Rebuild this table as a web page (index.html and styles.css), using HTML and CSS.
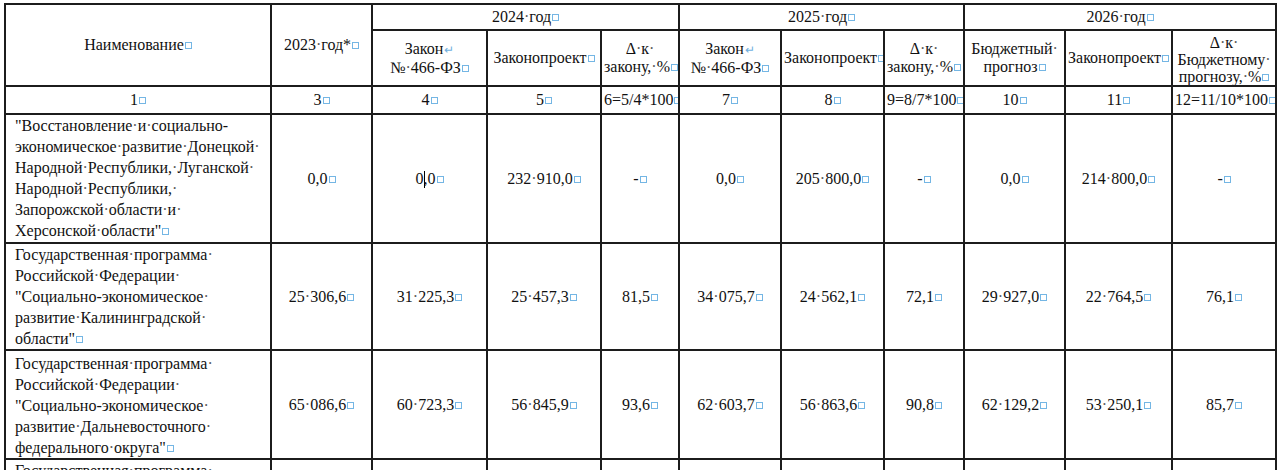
FILE: index.html
```html
<!DOCTYPE html>
<html lang="ru">
<head>
<meta charset="utf-8">
<title>Таблица — государственные программы</title>
<link rel="stylesheet" href="styles.css">
</head>
<body>

<!-- ====================== TABLE ====================== -->
<table class="doc-table">
  <colgroup>
    <col style="width:266px"><col style="width:101px">
    <col style="width:115px"><col style="width:114px"><col style="width:78px">
    <col style="width:102px"><col style="width:103px"><col style="width:80px">
    <col style="width:101px"><col style="width:107px"><col style="width:104px">
  </colgroup>
  <thead>
    <tr class="row-year">
      <th rowspan="2">Наименование<i class="cm"></i></th>
      <th rowspan="2">2023<span class="s">·</span>год*<i class="cm"></i></th>
      <th colspan="3">2024<span class="s">·</span>год<i class="cm"></i></th>
      <th colspan="3">2025<span class="s">·</span>год<i class="cm"></i></th>
      <th colspan="3">2026<span class="s">·</span>год<i class="cm"></i></th>
    </tr>
    <tr class="row-sub">
      <th>Закон<span class="br">↵</span><br>№<span class="s">·</span>466-ФЗ<i class="cm"></i></th>
      <th class="tight">Законопроект<i class="cm"></i></th>
      <th class="tight">Δ<span class="s">·</span>к<span class="s">·</span><br>закону,<span class="s">·</span>%<i class="cm"></i></th>
      <th>Закон<span class="br">↵</span><br>№<span class="s">·</span>466-ФЗ<i class="cm"></i></th>
      <th class="tight">Законопроект<i class="cm"></i></th>
      <th class="tight">Δ<span class="s">·</span>к<span class="s">·</span><br>закону,<span class="s">·</span>%<i class="cm"></i></th>
      <th>Бюджетный<span class="s">·</span><br>прогноз<i class="cm"></i></th>
      <th class="tight">Законопроект<i class="cm"></i></th>
      <th class="tight three">Δ<span class="s">·</span>к<span class="s">·</span><br>Бюджетному<span class="s">·</span><br>прогнозу,<span class="s">·</span>%<i class="cm"></i></th>
    </tr>
    <tr class="row-num">
      <th>1<i class="cm"></i></th>
      <th>3<i class="cm"></i></th>
      <th>4<i class="cm"></i></th>
      <th>5<i class="cm"></i></th>
      <th class="tight">6=5/4*100<i class="cm"></i></th>
      <th>7<i class="cm"></i></th>
      <th>8<i class="cm"></i></th>
      <th class="tight">9=8/7*100<i class="cm"></i></th>
      <th>10<i class="cm"></i></th>
      <th>11<i class="cm"></i></th>
      <th class="tight">12=11/10*100<i class="cm"></i></th>
    </tr>
  </thead>
  <tbody>
    <tr class="row-a">
      <td class="name">"Восстановление<span class="s">·</span>и<span class="s">·</span>социально-<br>экономическое<span class="s">·</span>развитие<span class="s">·</span>Донецкой<span class="s">·</span><br>Народной<span class="s">·</span>Республики,<span class="s">·</span>Луганской<span class="s">·</span><br>Народной<span class="s">·</span>Республики,<span class="s">·</span><br>Запорожской<span class="s">·</span>области<span class="s">·</span>и<span class="s">·</span><br>Херсонской<span class="s">·</span>области"<i class="cm"></i></td>
      <td>0,0<i class="cm"></i></td>
      <td>0<span class="caret"></span>,0<i class="cm"></i></td>
      <td>232<span class="s">·</span>910,0<i class="cm"></i></td>
      <td>-<i class="cm"></i></td>
      <td>0,0<i class="cm"></i></td>
      <td>205<span class="s">·</span>800,0<i class="cm"></i></td>
      <td>-<i class="cm"></i></td>
      <td>0,0<i class="cm"></i></td>
      <td>214<span class="s">·</span>800,0<i class="cm"></i></td>
      <td>-<i class="cm"></i></td>
    </tr>
    <tr class="row-b">
      <td class="name">Государственная<span class="s">·</span>программа<span class="s">·</span><br>Российской<span class="s">·</span>Федерации<span class="s">·</span><br>"Социально-экономическое<span class="s">·</span><br>развитие<span class="s">·</span>Калининградской<span class="s">·</span><br>области"<i class="cm"></i></td>
      <td>25<span class="s">·</span>306,6<i class="cm"></i></td>
      <td>31<span class="s">·</span>225,3<i class="cm"></i></td>
      <td>25<span class="s">·</span>457,3<i class="cm"></i></td>
      <td>81,5<i class="cm"></i></td>
      <td>34<span class="s">·</span>075,7<i class="cm"></i></td>
      <td>24<span class="s">·</span>562,1<i class="cm"></i></td>
      <td>72,1<i class="cm"></i></td>
      <td>29<span class="s">·</span>927,0<i class="cm"></i></td>
      <td>22<span class="s">·</span>764,5<i class="cm"></i></td>
      <td>76,1<i class="cm"></i></td>
    </tr>
    <tr class="row-c">
      <td class="name">Государственная<span class="s">·</span>программа<span class="s">·</span><br>Российской<span class="s">·</span>Федерации<span class="s">·</span><br>"Социально-экономическое<span class="s">·</span><br>развитие<span class="s">·</span>Дальневосточного<span class="s">·</span><br>федерального<span class="s">·</span>округа"<i class="cm"></i></td>
      <td>65<span class="s">·</span>086,6<i class="cm"></i></td>
      <td>60<span class="s">·</span>723,3<i class="cm"></i></td>
      <td>56<span class="s">·</span>845,9<i class="cm"></i></td>
      <td>93,6<i class="cm"></i></td>
      <td>62<span class="s">·</span>603,7<i class="cm"></i></td>
      <td>56<span class="s">·</span>863,6<i class="cm"></i></td>
      <td>90,8<i class="cm"></i></td>
      <td>62<span class="s">·</span>129,2<i class="cm"></i></td>
      <td>53<span class="s">·</span>250,1<i class="cm"></i></td>
      <td>85,7<i class="cm"></i></td>
    </tr>
    <tr class="row-d">
      <td class="name">Государственная<span class="s">·</span>программа<span class="s">·</span><br>Российской<span class="s">·</span>Федерации<span class="s">·</span></td>
      <td></td><td></td><td></td><td></td><td></td>
      <td></td><td></td><td></td><td></td><td></td>
    </tr>
  </tbody>
</table>

</body>
</html>
```

FILE: styles.css
```css
/* ---------- Base ---------- */
html,body{margin:0;padding:0;background:#fff;overflow:hidden}
body{padding:3px 0 0 4px;font-family:"Liberation Serif","Times New Roman",serif;font-size:16px;color:#111}
/* ---------- Table ---------- */
.doc-table{border-collapse:collapse;table-layout:fixed;width:1273px}
.doc-table th,.doc-table td{border:2px solid #1c1c1c;padding:0 4px;text-align:center;vertical-align:middle;
  font-weight:normal;white-space:nowrap;overflow:hidden}
.doc-table thead th{line-height:18px}
.doc-table th.tight{padding:0 2px}
.doc-table th.three{line-height:17px;padding-top:2px}
.row-year{height:26px}
.row-sub{height:56px}
.row-num{height:28px}
.row-a{height:129px}
.row-b{height:106px}
.row-c{height:109px}
.row-d{height:110px}
.doc-table td{line-height:21px}
.doc-table td.name{text-align:left;vertical-align:top;padding:0 6px 0 9px}
.row-c td.name{padding-top:2px}
/* ---------- Formatting marks ---------- */
.s{color:#5a5a5a}
.br{color:#6fb0e0;font-size:12px;margin-left:1px}
.cm{display:inline-block;width:5px;height:5px;border:1px solid #74b6e4;margin-left:1px;vertical-align:1px}
.caret{display:inline-block;width:1px;height:17px;background:#000;vertical-align:-4px;margin-right:-1px}
```
